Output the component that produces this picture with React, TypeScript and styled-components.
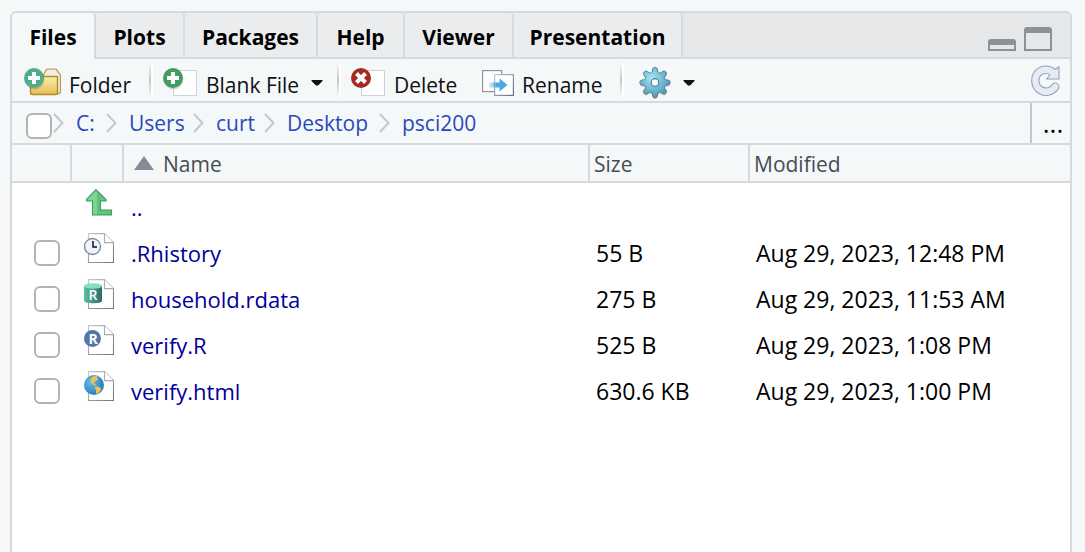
import React from "react";
import styled, { createGlobalStyle, css } from "styled-components";

const line = "#d6dadc";
const surface = "#f4f8f9";

const GlobalStyle = createGlobalStyle`
  * { box-sizing: border-box; }
  body {
    margin: 0;
    background: #f6f7f9;
    font-family: "Open Sans", "Noto Sans", sans-serif;
    color: #000;
  }
  svg { display: block; flex: none; }
`;

const Page = styled.main`
  display: flex;
  min-height: 100vh;
  padding: 11px 13px 0 10px;
`;

const Pane = styled.section`
  flex: 1;
  min-width: 0;
  background: #fff;
  border: 2px solid ${line};
  border-bottom: 0;
  border-radius: 6px 6px 0 0;
  overflow: hidden;
`;

const TabBar = styled.header`
  display: flex;
  height: 46px;
  background: #e6e7e8;
`;

const Tabs = styled.div`
  display: flex;
  flex: 1;
  border-bottom: 2px solid ${line};
`;

const Tab = styled.button<{ $width: number; $active?: boolean }>`
  width: ${(p) => p.$width}px;
  height: 44px;
  padding: 3px 0 0;
  border: 0;
  border-right: 2px solid ${line};
  border-radius: 4px 4px 0 0;
  background: #ebecee;
  font: 700 21px/30px "Open Sans", sans-serif;
  color: #000;
  white-space: nowrap;
  ${(p) =>
    p.$active &&
    css`
      height: 46px;
      margin-bottom: -2px;
      padding-bottom: 2px;
      background: ${surface};
    `}
`;

const WindowButtons = styled.div`
  display: flex;
  align-items: flex-end;
  gap: 8px;
  padding: 0 18px 6px 0;
  border-bottom: 2px solid ${line};
`;

const IconButton = styled.button`
  display: flex;
  padding: 0;
  border: 0;
  background: none;
`;

const Toolbar = styled.div`
  display: flex;
  align-items: center;
  height: 44px;
  padding: 0 10px 0 12px;
  background: ${surface};
  border-bottom: 2px solid ${line};
`;

const ToolButton = styled.button<{ $width: number }>`
  display: flex;
  align-items: center;
  gap: 8px;
  width: ${(p) => p.$width}px;
  height: 42px;
  padding: 4px 0 0;
  border: 0;
  background: none;
  font: 400 21px/30px "Open Sans", sans-serif;
  color: #111;
  white-space: nowrap;
`;

const GearButton = styled(ToolButton)`
  padding-left: 5px;
`;

const ToolLabel = styled.span`
  padding-top: 6px;
`;

const CaretSlot = styled.span`
  padding: 2px 0 0 4px;
`;

const Separator = styled.span`
  width: 4px;
  height: 34px;
  margin-right: 10px;
  border-right: 2px solid #fff;
  background: linear-gradient(${surface}, #c5c8cb 50%, ${surface});
`;

const Spacer = styled.span`
  flex: 1;
`;

const PathBar = styled.nav`
  display: flex;
  height: 42px;
  background: ${surface};
  border-bottom: 2px solid ${line};
`;

const Crumbs = styled.div`
  display: flex;
  flex: 1;
  padding-left: 14px;
`;

const Crumb = styled.a<{ $width: number }>`
  display: flex;
  align-items: center;
  gap: 12px;
  width: ${(p) => p.$width}px;
  font-size: 21px;
  line-height: 30px;
  color: #2b48b8;
  text-decoration: none;
  white-space: nowrap;
`;

const Browse = styled.button`
  width: 40px;
  padding: 0 0 0 4px;
  border: 0;
  border-left: 2px solid #c3c7ca;
  background: none;
  font: 400 26px/30px "Open Sans", sans-serif;
  color: #000;
`;

const Check = styled.input`
  appearance: none;
  display: block;
  flex: none;
  width: 26px;
  height: 26px;
  margin: 0;
  border: 2px solid #b3b3b3;
  border-radius: 6px;
  background: #fff;
`;

const CheckSlot = styled.div`
  padding: 10px 1px 0 0;
`;

const Table = styled.table`
  width: 100%;
  table-layout: fixed;
  border-collapse: separate;
  border-spacing: 0;
`;

const HeadCell = styled.th`
  height: 38px;
  padding: 2px 0 0 4px;
  background: ${surface};
  border-right: 2px solid ${line};
  border-bottom: 2px solid ${line};
  font-size: 21px;
  font-weight: 400;
  line-height: 30px;
  text-align: left;
  color: #474c52;
  &:last-child { border-right: 0; }
`;

const SortLabel = styled.span`
  display: flex;
  align-items: center;
  gap: 9px;
  padding-left: 6px;
`;

const Cell = styled.td<{ $left: number; $top?: boolean }>`
  height: 46px;
  padding: ${(p) => (p.$top ? "3px" : "0")} 0 0 ${(p) => p.$left}px;
  vertical-align: ${(p) => (p.$top ? "top" : "middle")};
  font-size: 23px;
  line-height: 32px;
  white-space: nowrap;
`;

const FileLink = styled.a`
  font-size: 22px;
  color: #00009c;
  text-decoration: none;
`;

const TableBody = styled.tbody`
  &::before {
    content: "";
    display: block;
    height: 1px;
  }
`;

const Caret = () => (
  <CaretSlot>
    <svg width="12" height="6" viewBox="0 0 12 6">
      <path d="M0.5 0h11v1L7 5.5H5L0.5 1z" fill="#111" />
    </svg>
  </CaretSlot>
);

const Plus = ({ fill }: { fill: string }) => (
  <>
    <circle cx="10.5" cy="11.5" r="10" fill="#000" opacity=".15" />
    <circle cx="10" cy="10" r="10" fill={fill} />
    <path d="M10 4v12M4 10h12" stroke="#fff" strokeWidth="4" />
  </>
);

const FolderIcon = () => (
  <svg width="37" height="28" viewBox="0 0 37 28">
    <defs>
      <linearGradient id="folder" x2="0" y2="1">
        <stop stopColor="#f8eeb0" />
        <stop offset="1" stopColor="#e5bd52" />
      </linearGradient>
    </defs>
    <path d="M19 8l2-4q1-3 3-3h7q2 0 3 3l2.5 3v16q0 3-3 3H20z" fill="#f0eee5" stroke="#b8983b" strokeWidth="1.2" />
    <path d="M6.5 8.5h27v16q0 2-2 2h-23q-2 0-2-2z" fill="url(#folder)" stroke="#b08a28" strokeWidth="1.4" />
    <Plus fill="#4fae88" />
  </svg>
);

const NewFileIcon = () => (
  <svg width="35" height="28" viewBox="0 0 35 28">
    <rect x="10.5" y="2.5" width="23" height="25" fill="#fff" stroke="#ccd4da" />
    <Plus fill="#439c62" />
  </svg>
);

const DeleteIcon = () => (
  <svg width="35" height="28" viewBox="0 0 35 28">
    <rect x="10.5" y="2.5" width="23" height="25" fill="#fff" stroke="#ccd4da" />
    <circle cx="10" cy="10" r="10" fill="#a5291f" />
    <path d="M5.5 5.5l9 9M14.5 5.5l-9 9" stroke="#fff" strokeWidth="4" />
  </svg>
);

const RenameIcon = () => (
  <svg width="32" height="28" viewBox="0 -2 32 28">
    <defs>
      <linearGradient id="rename">
        <stop stopColor="#8cc9f2" stopOpacity=".3" />
        <stop offset=".4" stopColor="#4aa8e6" />
      </linearGradient>
      <linearGradient id="frame" x2="1" y2="1">
        <stop stopColor="#c2c7cf" />
        <stop offset="1" stopColor="#6a6e7d" />
      </linearGradient>
    </defs>
    <rect x=".6" y=".6" width="19" height="21" fill="#fff" stroke="#8f959e" strokeWidth="1.2" />
    <rect x="12.6" y="4.6" width="18.8" height="20.8" fill="#fff" stroke="url(#frame)" strokeWidth="1.2" />
    <path d="M7 12.5h10.5v-4l8 6.5-8 6.5v-4H7z" fill="url(#rename)" />
  </svg>
);

const gearPath = (() => {
  const points: string[] = [];
  for (let i = 0; i <= 160; i++) {
    const a = (i / 160) * Math.PI * 2;
    const wave = Math.cos(8 * a);
    const r = 12.8 + 2.4 * Math.tanh(wave * 1.8);
    points.push(`${(16 + r * Math.cos(a)).toFixed(2)} ${(15.5 + r * Math.sin(a)).toFixed(2)}`);
  }
  return `M${points.join("L")}Z`;
})();

const GearIcon = () => (
  <svg width="32" height="30" viewBox="0 0 32 30" overflow="visible">
    <defs>
      <radialGradient id="gear" cx=".4" cy=".35" r=".65">
        <stop stopColor="#a3e6f5" />
        <stop offset="1" stopColor="#4d97b9" />
      </radialGradient>
    </defs>
    <path d={gearPath} transform="translate(0 1.5)" fill="#000" opacity=".22" />
    <path d={gearPath} fill="url(#gear)" stroke="#4a7488" strokeWidth=".9" />
    <circle cx="16" cy="15.5" r="3.8" fill="#f4f8f9" stroke="#4a7f96" strokeWidth="1.2" />
  </svg>
);

const RefreshIcon = () => (
  <svg width="29" height="31" viewBox="0 0 29 31">
    <path
      d="M28 1.5V14H15.5l3.5-4C15.5 7 8 8.5 8 15.5s7.5 9.5 12 5.5C22 19 21.5 18 24 18s4 2 4 4-5 8.5-13 8.5S.7 24 .7 15.5 7 1 15 1c4 0 7 1.5 9.5 3.5z"
      fill="#e6ebf8"
      stroke="#9ba2b2"
      strokeWidth="1.1"
      strokeLinejoin="round"
    />
  </svg>
);

const MinimizeIcon = () => (
  <svg width="28" height="12" viewBox="0 0 28 12">
    <path d="M0 12V3q0-3 3-3h22q3 0 3 3v9z" fill="#8b9194" />
    <path d="M2 6h24v4H2z" fill="#e6e7e8" />
  </svg>
);

const MaximizeIcon = () => (
  <svg width="28" height="24" viewBox="0 0 28 24">
    <path d="M0 24V3q0-3 3-3h22q3 0 3 3v21z" fill="#8b9194" />
    <path d="M2 6h24v16H2z" fill="#e6e7e8" />
  </svg>
);

const Chevron = () => (
  <svg width="11" height="20" viewBox="0 0 11 20">
    <path d="M1 1l8.5 9L1 19" fill="none" stroke="#c3c8cc" strokeWidth="2" />
  </svg>
);

const SortArrow = () => (
  <svg width="20" height="16" viewBox="0 0 20 16">
    <path d="M10 0l10 14H0z" fill="#848a98" />
  </svg>
);

const UpIcon = () => (
  <svg width="30" height="30" viewBox="0 0 30 30">
    <defs>
      <linearGradient id="up">
        <stop stopColor="#7ed99a" />
        <stop offset=".4" stopColor="#78d695" />
        <stop offset=".42" stopColor="#5fc37e" />
        <stop offset="1" stopColor="#5fc37e" />
      </linearGradient>
    </defs>
    <path
      d="M12 2.6l10 9.9V14h-5.5v9h11v5h-19V14h-6v-1.5z"
      fill="url(#up)"
      stroke="#3f9c5c"
      strokeWidth="1.1"
    />
  </svg>
);

type FileKind = "history" | "rdata" | "script" | "html";

const badges: Record<FileKind, React.ReactNode> = {
  history: (
    <>
      <circle cx="8.5" cy="13.5" r="8" fill="#edf3fb" stroke="#7d899d" strokeWidth="1.3" />
      <path d="M9 8v6h4" fill="none" stroke="#111" strokeWidth="1.5" />
    </>
  ),
  rdata: (
    <>
      <path d="M0 7v15c0 3 18 3 18 0V7z" fill="url(#cylinder)" />
      <ellipse cx="9" cy="7" rx="9" ry="2.8" fill="#86dfc5" />
      <text x="9" y="21" textAnchor="middle" fontSize="14" fontWeight="600" fill="#fff">R</text>
    </>
  ),
  script: (
    <>
      <circle cx="8.5" cy="13.5" r="8.5" fill="#5374a6" />
      <text x="9" y="18.5" textAnchor="middle" fontSize="14" fontWeight="700" fill="#fff">R</text>
    </>
  ),
  html: (
    <>
      <circle cx="10" cy="14" r="10" fill="url(#globe)" />
      <path
        d="M7 7q2-2.5 6.5-2l-.5 2 1.500 1.5-3 1.5-2 2.5 3 1.5-1.5 1-4-3-.5-3zM12 15.5l3.5.5 2 2.5-4 4.5-1.5-1v-3l-1.5-2z"
        fill="#eec351"
      />
    </>
  ),
};

const FileIcon = ({ kind }: { kind: FileKind }) => (
  <svg width="30" height="30" viewBox="0 0 30 30">
    <defs>
      <linearGradient id="page" x2="1" y2="1">
        <stop stopColor="#c9c9c9" />
        <stop offset="1" stopColor="#70747e" />
      </linearGradient>
      <linearGradient id="cylinder">
        <stop stopColor="#5cc0a0" />
        <stop offset="1" stopColor="#2b6d68" />
      </linearGradient>
      <radialGradient id="globe" cx=".35" cy=".35" r=".65">
        <stop stopColor="#64bdec" />
        <stop offset="1" stopColor="#2c80bd" />
      </radialGradient>
    </defs>
    <path d="M4.5.6h16l9 9v19.9h-25z" fill="#fff" stroke="url(#page)" strokeWidth="1.1" />
    <path d="M20.5.6v9h9" fill="#fff" stroke="#a9acb2" strokeWidth="1.1" />
    {badges[kind]}
  </svg>
);

const tabs = [
  { name: "Files", width: 84 },
  { name: "Plots", width: 89 },
  { name: "Packages", width: 133 },
  { name: "Help", width: 87 },
  { name: "Viewer", width: 109 },
  { name: "Presentation", width: 169 },
];

const crumbs = [
  { name: "C:", width: 53 },
  { name: "Users", width: 87 },
  { name: "curt", width: 71 },
  { name: "Desktop", width: 115 },
  { name: "psci200", width: 120 },
];

const files: { name: string; kind: FileKind; size: string; modified: string }[] = [
  { name: ".Rhistory", kind: "history", size: "55 B", modified: "Aug 29, 2023, 12:48 PM" },
  { name: "household.rdata", kind: "rdata", size: "275 B", modified: "Aug 29, 2023, 11:53 AM" },
  { name: "verify.R", kind: "script", size: "525 B", modified: "Aug 29, 2023, 1:08 PM" },
  { name: "verify.html", kind: "html", size: "630.6 KB", modified: "Aug 29, 2023, 1:00 PM" },
];

export default function App() {
  return (
    <>
      <GlobalStyle />
      <Page>
        <Pane>
          <TabBar>
            <Tabs role="tablist">
              {tabs.map((t, i) => (
                <Tab key={t.name} role="tab" aria-selected={i === 0} $width={t.width} $active={i === 0}>
                  {t.name}
                </Tab>
              ))}
            </Tabs>
            <WindowButtons>
              <IconButton aria-label="Minimize"><MinimizeIcon /></IconButton>
              <IconButton aria-label="Maximize"><MaximizeIcon /></IconButton>
            </WindowButtons>
          </TabBar>

          <Toolbar>
            <ToolButton $width={125}><FolderIcon /><ToolLabel>Folder</ToolLabel></ToolButton>
            <Separator />
            <ToolButton $width={174}>
              <NewFileIcon /><ToolLabel>Blank File</ToolLabel><Caret />
            </ToolButton>
            <Separator />
            <ToolButton $width={131}><DeleteIcon /><ToolLabel>Delete</ToolLabel></ToolButton>
            <ToolButton $width={138}><RenameIcon /><ToolLabel>Rename</ToolLabel></ToolButton>
            <Separator />
            <GearButton $width={81} aria-label="More"><GearIcon /><Caret /></GearButton>
            <Spacer />
            <IconButton aria-label="Refresh"><RefreshIcon /></IconButton>
          </Toolbar>

          <PathBar aria-label="Folder path">
            <Crumbs>
              <CheckSlot><Check type="checkbox" aria-label="Select all" /></CheckSlot>
              {crumbs.map((c) => (
                <Crumb key={c.name} href="#" $width={c.width}>
                  <Chevron />
                  {c.name}
                </Crumb>
              ))}
            </Crumbs>
            <Browse aria-label="Go to folder">...</Browse>
          </PathBar>

          <Table>
            <colgroup>
              <col width="60" />
              <col width="52" />
              <col width="466" />
              <col width="160" />
              <col />
            </colgroup>
            <thead>
              <tr>
                <HeadCell />
                <HeadCell />
                <HeadCell><SortLabel><SortArrow />Name</SortLabel></HeadCell>
                <HeadCell>Size</HeadCell>
                <HeadCell>Modified</HeadCell>
              </tr>
            </thead>
            <TableBody>
              <tr>
                <Cell $left={22} />
                <Cell $left={12} $top><UpIcon /></Cell>
                <Cell $left={7}><FileLink href="#">..</FileLink></Cell>
                <Cell $left={6} />
                <Cell $left={6} />
              </tr>
              {files.map((f) => (
                <tr key={f.name}>
                  <Cell $left={22}><Check type="checkbox" aria-label={`Select ${f.name}`} /></Cell>
                  <Cell $left={12} $top><FileIcon kind={f.kind} /></Cell>
                  <Cell $left={7}><FileLink href="#">{f.name}</FileLink></Cell>
                  <Cell $left={6}>{f.size}</Cell>
                  <Cell $left={6}>{f.modified}</Cell>
                </tr>
              ))}
            </TableBody>
          </Table>
        </Pane>
      </Page>
    </>
  );
}
